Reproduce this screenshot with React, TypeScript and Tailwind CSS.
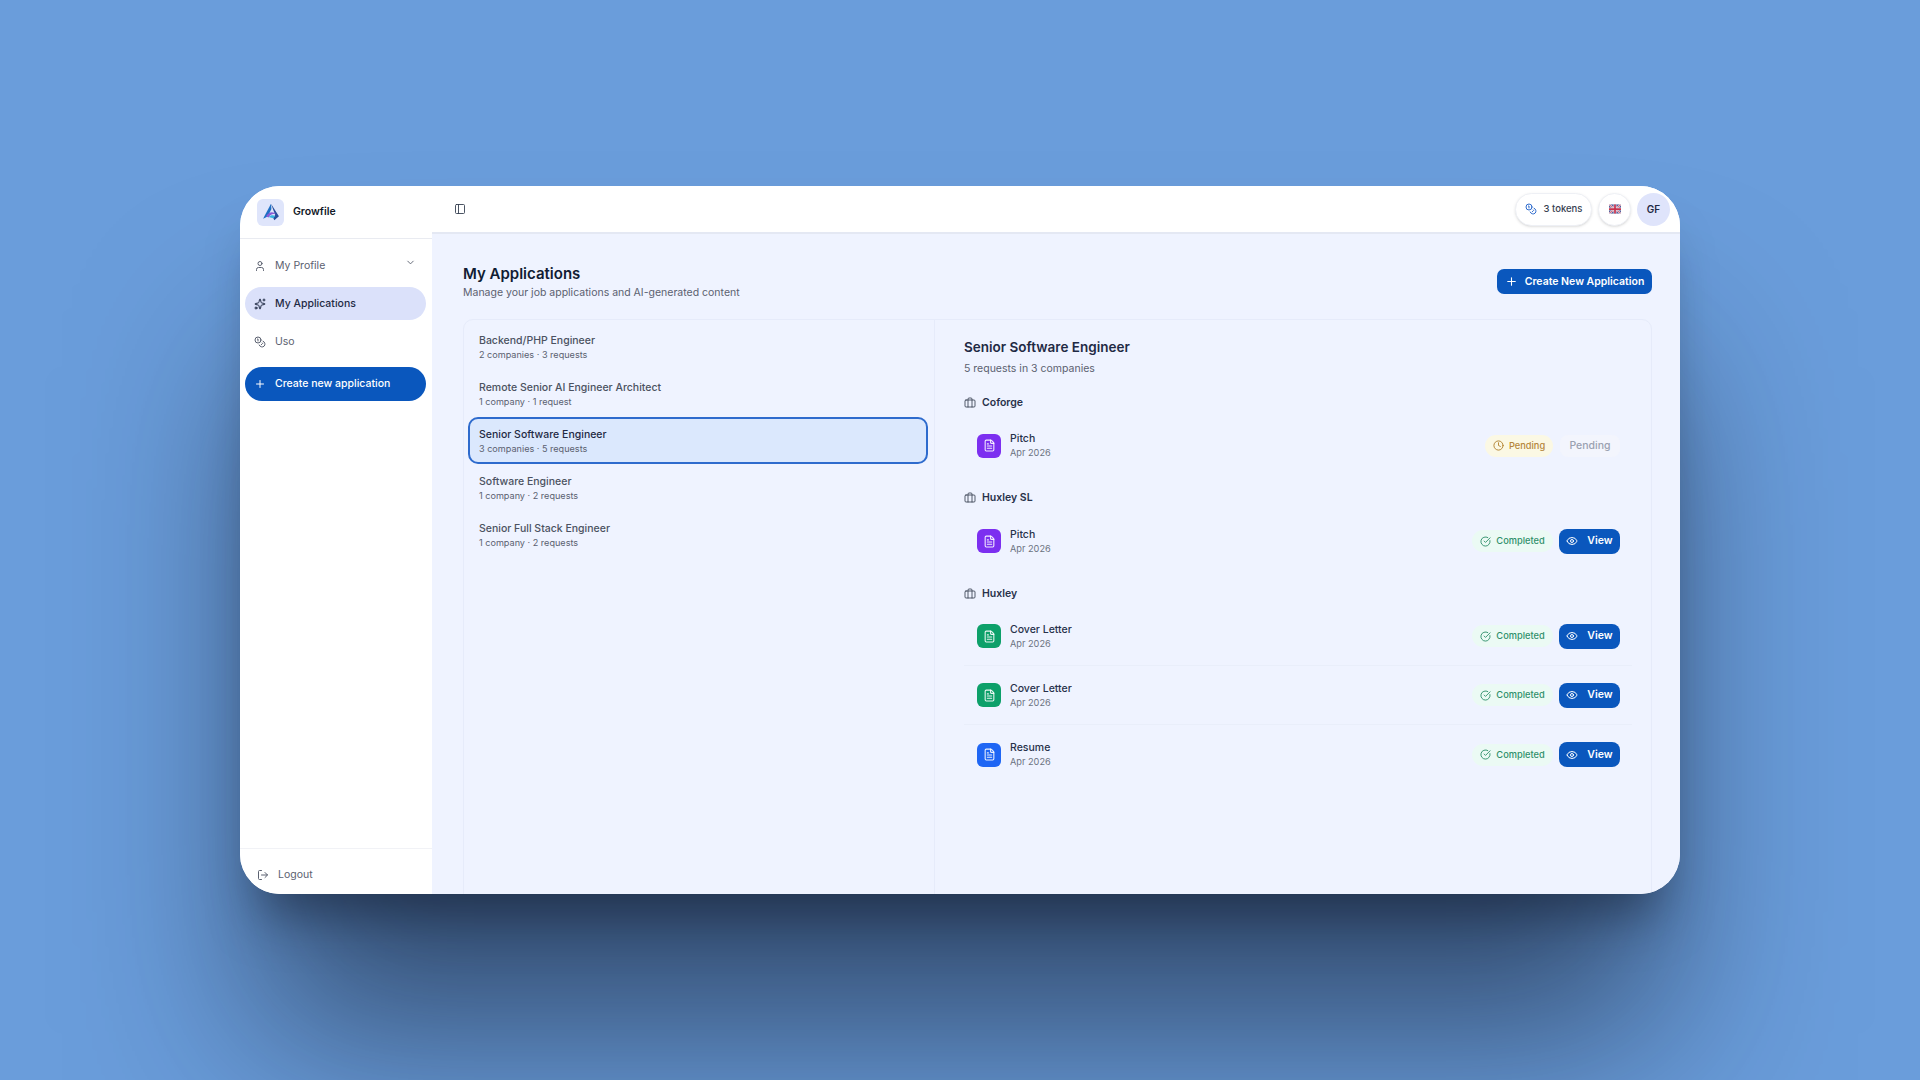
import React from "react";
import {
  Briefcase,
  ChevronDown,
  CircleCheckBig,
  Clock,
  Coins,
  Eye,
  FileText,
  LogOut,
  PanelLeft,
  Plus,
  Sparkles,
  User,
} from "lucide-react";

const roles = [
  { name: "Backend/PHP Engineer", meta: "2 companies · 3 requests" },
  { name: "Remote Senior AI Engineer Architect", meta: "1 company · 1 request" },
  { name: "Senior Software Engineer", meta: "3 companies · 5 requests", active: true },
  { name: "Software Engineer", meta: "1 company · 2 requests" },
  { name: "Senior Full Stack Engineer", meta: "1 company · 2 requests" },
];

type Req = { label: string; tone: string; done: boolean };

const groups: { company: string; items: Req[] }[] = [
  { company: "Coforge", items: [{ label: "Pitch", tone: "bg-[#7c2ff0]", done: false }] },
  { company: "Huxley SL", items: [{ label: "Pitch", tone: "bg-[#7c2ff0]", done: true }] },
  {
    company: "Huxley",
    items: [
      { label: "Cover Letter", tone: "bg-[#0da06a]", done: true },
      { label: "Cover Letter", tone: "bg-[#0da06a]", done: true },
      { label: "Resume", tone: "bg-[#1f66f4]", done: true },
    ],
  },
];

const Logo = () => (
  <svg viewBox="0 0 24 24" className="h-[20px] w-[20px]">
    <path d="M12 2 L2.5 20 L8 17.5 L12.5 8.5 Z" fill="#1d6fc4" />
    <path d="M12 2 L21.5 17 L16 22 L14.5 19 L17 15.5 Z" fill="#2a4f9c" />
    <path d="M6 17 C10 11 15 11 18 15 C14 13.5 11 15 9 18.5 Z" fill="#8a5cd6" />
    <path d="M9 18 C12 15 15 15.5 17 17 L14.5 19.5 Z" fill="#35b4e0" />
  </svg>
);

const Flag = () => (
  <svg viewBox="0 0 24 18" className="h-[10px] w-[12px] rounded-[2px]">
    <rect width="24" height="18" fill="#3b4a8f" />
    <path d="M0 0 L24 18 M24 0 L0 18" stroke="#e8dfe6" strokeWidth="4" />
    <path d="M0 0 L24 18 M24 0 L0 18" stroke="#c8344f" strokeWidth="1.5" />
    <path d="M12 0 V18 M0 9 H24" stroke="#e8dfe6" strokeWidth="6" />
    <path d="M12 0 V18 M0 9 H24" stroke="#c8344f" strokeWidth="3.5" />
  </svg>
);

const NavItem = ({ icon, label, active }: { icon: React.ReactNode; label: string; active?: boolean }) => (
  <div
    className={`flex h-[33px] items-center gap-[9px] rounded-full pl-[9px] text-[10.5px] ${
      active ? "bg-[#dbe1fa] font-medium text-[#1f2a44]" : "text-[#5b6170]"
    }`}
  >
    {icon}
    <span>{label}</span>
  </div>
);

export default function App() {
  return (
    <div className="flex h-screen items-center justify-center overflow-hidden bg-[#6a9ddb] [font-family:Inter,sans-serif]">
      <div className="flex h-[708px] w-[1440px] overflow-hidden rounded-[40px] bg-white shadow-[0_160px_180px_-20px_rgba(15,23,42,0.6),0_40px_50px_-20px_rgba(15,23,42,0.5)]">
        {/* Sidebar */}
        <aside className="flex w-[192px] shrink-0 flex-col bg-white">
          <div className="flex h-[53px] items-center gap-[9px] border-b border-[#e9ebf1] pl-[17px]">
            <div className="flex h-[27px] w-[27px] items-center justify-center rounded-[6px] bg-[#dfe5fb]">
              <Logo />
            </div>
            <span className="text-[10.5px] font-semibold text-[#111827]">Growfile</span>
          </div>
          <nav className="flex flex-col gap-[5px] pl-[5px] pr-[6px] pt-[10px]">
            <div className="relative">
              <NavItem icon={<User size={12} strokeWidth={2} />} label="My Profile" />
              <ChevronDown size={11} strokeWidth={2} className="absolute right-[10px] top-[8px] text-[#5b6170]" />
            </div>
            <NavItem icon={<Sparkles size={12} strokeWidth={2} />} label="My Applications" active />
            <NavItem icon={<Coins size={12} strokeWidth={2} />} label="Uso" />
            <div className="mt-[4px] flex h-[34px] items-center gap-[9px] rounded-full bg-[#0a57bd] pl-[9px] text-[10.5px] font-medium text-white">
              <Plus size={12} strokeWidth={2} />
              <span>Create new application</span>
            </div>
          </nav>
          <div className="mt-auto flex h-[46px] items-center gap-[9px] border-t border-[#f1f2f6] pl-[17px] pt-[7px] text-[10.5px] text-[#5b6170]">
            <LogOut size={12} strokeWidth={2} />
            <span>Logout</span>
          </div>
        </aside>

        {/* Main */}
        <div className="flex min-w-0 flex-1 flex-col overflow-hidden bg-[#eff3ff]">
          <header className="flex h-[48px] shrink-0 items-center justify-between border-b-2 border-[#e4e8f3] bg-white pl-[22px] pr-[10px]">
            <PanelLeft size={12} strokeWidth={1.8} className="text-[#374151]" />
            <div className="flex items-center gap-[6px]">
              <div className="flex h-[33px] w-[77px] items-center justify-center gap-[7px] rounded-full border border-[#eef0f5] bg-white text-[9.5px] font-medium text-[#374151] shadow-sm">
                <Coins size={12} strokeWidth={2} className="text-[#2e6bcd]" />
                <span>3 tokens</span>
              </div>
              <div className="flex h-[33px] w-[33px] items-center justify-center rounded-full border border-[#eef0f5] bg-white shadow-sm">
                <Flag />
              </div>
              <div className="flex h-[33px] w-[33px] items-center justify-center rounded-full bg-[#dfe4fb] text-[10px] font-semibold text-[#1f2a44]">
                GF
              </div>
            </div>
          </header>

          <main className="flex min-h-0 flex-1 flex-col pl-[31px] pr-[28px] pt-[30px]">
            <div className="flex items-center justify-between">
              <div>
                <h1 className="text-[15px] font-semibold leading-[20px] text-[#111c33]">My Applications</h1>
                <p className="mt-[1.5px] text-[10.5px] leading-[14px] text-[#5b6170]">
                  Manage your job applications and AI-generated content
                </p>
              </div>
              <button className="flex h-[25px] w-[155px] items-center justify-center gap-[7px] rounded-[7px] bg-[#0a57bd] text-[10.5px] font-semibold text-white">
                <Plus size={13} strokeWidth={2} />
                Create New Application
              </button>
            </div>

            <div className="mt-[19.5px] flex h-[600px] shrink-0 rounded-[10px] border border-[#e6ebfa]">
              <div className="w-[471px] shrink-0 border-r border-[#e6ebfa] pl-[4px] pr-[6px] pt-[3px]">
                {roles.map((r) => (
                  <div
                    key={r.name}
                    className={`flex h-[47px] flex-col justify-center rounded-[10px] border-2 pl-[9px] ${
                      r.active ? "border-[#2e6bcd] bg-[#dbe8fd]" : "border-transparent"
                    }`}
                  >
                    <div className={`text-[10.5px] font-medium leading-[15px] ${r.active ? "text-[#1f2a44]" : "text-[#4b5261]"}`}>
                      {r.name}
                    </div>
                    <div className="text-[9.1px] leading-[13px] text-[#5b6170]">{r.meta}</div>
                  </div>
                ))}
              </div>

              <div className="min-w-0 flex-1 pl-[29px] pr-[19px] pt-[17px]">
                <h2 className="text-[13.5px] font-semibold leading-[20px] text-[#1f2a44]">Senior Software Engineer</h2>
                <p className="mt-[4px] text-[10.5px] leading-[15px] text-[#5b6170]">5 requests in 3 companies</p>
                <div className="mt-[16.5px] flex flex-col gap-[13px]">
                  {groups.map((g) => (
                    <section key={g.company}>
                      <div className="mb-[3.5px] flex h-[20px] items-center gap-[6px] text-[10.5px] font-semibold text-[#27314a]">
                        <Briefcase size={12} strokeWidth={1.7} className="text-[#374151]" />
                        {g.company}
                      </div>
                      {g.items.map((it, i) => (
                        <div
                          key={i}
                          className={`flex h-[59px] items-center justify-between pl-[13px] pr-[12px] ${
                            i < g.items.length - 1 ? "border-b border-[#e9eefa]" : ""
                          }`}
                        >
                          <div className="flex items-center gap-[9px]">
                            <div className={`flex h-[24px] w-[24px] items-center justify-center rounded-[6px] ${it.tone}`}>
                              <FileText size={13} strokeWidth={2} className="text-white/90" />
                            </div>
                            <div>
                              <div className="text-[10.5px] font-medium leading-[14px] text-[#27314a]">{it.label}</div>
                              <div className="text-[9.2px] leading-[13px] text-[#6b7280]">Apr 2026</div>
                            </div>
                          </div>
                          {it.done ? (
                            <div className="flex items-center gap-[6px]">
                              <div className="flex h-[22px] w-[81px] items-center justify-center gap-[5px] rounded-full bg-[#ebfaf4] text-[9.25px] font-medium text-[#2f8f6a]">
                                <CircleCheckBig size={11} strokeWidth={2} />
                                Completed
                              </div>
                              <button className="flex h-[25px] w-[61px] items-center justify-center gap-[9px] rounded-[8px] bg-[#0a57bd] text-[10.5px] font-semibold text-white">
                                <Eye size={12} strokeWidth={2} />
                                View
                              </button>
                            </div>
                          ) : (
                            <div className="flex items-center gap-[7px]">
                              <div className="flex h-[22px] w-[68px] items-center justify-center gap-[5px] rounded-full bg-[#fbf8e4] text-[9.25px] font-medium text-[#b5863a]">
                                <Clock size={11} strokeWidth={2} className="text-[#b07f2c]" />
                                Pending
                              </div>
                              <div className="flex h-[22px] w-[60px] items-center justify-center rounded-[8px] bg-[#f3f5fd] text-[10.5px] font-medium text-[#9aa1b1]">
                                Pending
                              </div>
                            </div>
                          )}
                        </div>
                      ))}
                    </section>
                  ))}
                </div>
              </div>
            </div>
          </main>
        </div>
      </div>
    </div>
  );
}
